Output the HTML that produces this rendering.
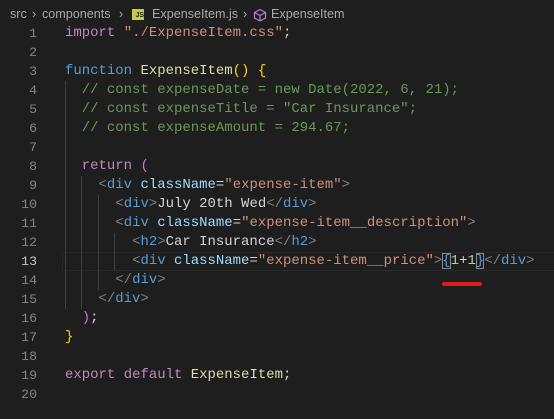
<!DOCTYPE html>
<html><head><style>
body{margin:0;width:554px;height:419px;background:#1e1e1e;overflow:hidden;position:relative;font-family:"Liberation Mono",monospace;}
.bc{position:absolute;top:0;left:0;height:28px;width:554px;font-family:"Liberation Sans",sans-serif;font-size:12.6px;color:#a9a9a9;line-height:28px;}
.bc span{position:absolute;top:0}
.ln{position:absolute;left:0;width:37px;text-align:right;color:#858585;font-size:13.2px;line-height:19px;}
.code{position:absolute;left:65px;font-size:13.97px;line-height:19px;color:#d4d4d4;white-space:pre;}
.k{color:#c586c0}.b{color:#569cd6}.f{color:#dcdcaa}.s{color:#ce9178}.c{color:#6a9955}.g{color:#808080}.a{color:#9cdcfe}.y{color:#ffd700}.p{color:#da70d6}.n{color:#b5cea8}
.guide{position:absolute;width:1px;background:#404040}
</style></head><body>
<div class="bc">
<span style="left:10px">src</span><span style="left:32px">›</span>
<span style="left:42px">components</span><span style="left:119px">›</span>
<span style="left:132px;top:9px;width:12px;height:11px;background:#cbcb41;color:#1e1e1e;font-size:7px;line-height:14px;text-align:right;font-weight:bold">JS</span>
<span style="left:152px">ExpenseItem.js</span><span style="left:243px">›</span>
<svg style="position:absolute;left:253px;top:8px" width="14" height="14" viewBox="0 0 14 14"><path d="M7 1.5L12.5 4.5V10L7 13 1.5 10V4.5Z M1.5 4.5L7 7.5 12.5 4.5 M7 7.5V13" fill="none" stroke="#b180d7" stroke-width="1.2"/></svg>
<span style="left:271px">ExpenseItem</span>
</div>
<div style="position:absolute;left:62px;top:252px;width:492px;height:17px;border:1px solid #282828"></div>
<div class="guide" style="left:65px;top:81px;height:228px"></div>
<div class="guide" style="left:81px;top:176px;height:133px"></div>
<div class="guide" style="left:98px;top:195px;height:95px"></div>
<div class="guide" style="left:114px;top:233px;height:38px"></div>
<div class="ln" style="top:24px">1<br>2<br>3<br>4<br>5<br>6<br>7<br>8<br>9<br>10<br>11<br>12<br><span style="color:#c6c6c6">13</span><br>14<br>15<br>16<br>17<br>18<br>19<br>20</div>
<div class="code" style="top:24px"><span class="k">import</span> <span class="s">"./ExpenseItem.css"</span>;

<span class="b">function</span> <span class="f">ExpenseItem</span><span class="y">()</span> <span class="y">{</span>
  <span class="c">// const expenseDate = new Date(2022, 6, 21);</span>
  <span class="c">// const expenseTitle = "Car Insurance";</span>
  <span class="c">// const expenseAmount = 294.67;</span>

  <span class="k">return</span> <span class="p">(</span>
    <span class="g">&lt;</span><span class="b">div</span> <span class="a">className</span>=<span class="s">"expense-item"</span><span class="g">&gt;</span>
      <span class="g">&lt;</span><span class="b">div</span><span class="g">&gt;</span>July 20th Wed<span class="g">&lt;/</span><span class="b">div</span><span class="g">&gt;</span>
      <span class="g">&lt;</span><span class="b">div</span> <span class="a">className</span>=<span class="s">"expense-item__description"</span><span class="g">&gt;</span>
        <span class="g">&lt;</span><span class="b">h2</span><span class="g">&gt;</span>Car Insurance<span class="g">&lt;/</span><span class="b">h2</span><span class="g">&gt;</span>
        <span class="g">&lt;</span><span class="b">div</span> <span class="a">className</span>=<span class="s">"expense-item__price"</span><span class="g">&gt;</span><span class="b" style="outline:1px solid #888;outline-offset:-1px">{</span><span class="n">1</span>+<span class="n">1</span><span class="b" style="outline:1px solid #888;outline-offset:-1px">}</span><span class="g">&lt;/</span><span class="b">div</span><span class="g">&gt;</span>
      <span class="g">&lt;/</span><span class="b">div</span><span class="g">&gt;</span>
    <span class="g">&lt;/</span><span class="b">div</span><span class="g">&gt;</span>
  <span class="p">)</span>;
<span class="y">}</span>

<span class="k">export</span> <span class="k">default</span> <span class="f">ExpenseItem</span>;
</div>
<div style="position:absolute;left:442px;top:282px;width:40px;height:4px;background:#e01b1b;border-radius:2px"></div>
</body></html>
